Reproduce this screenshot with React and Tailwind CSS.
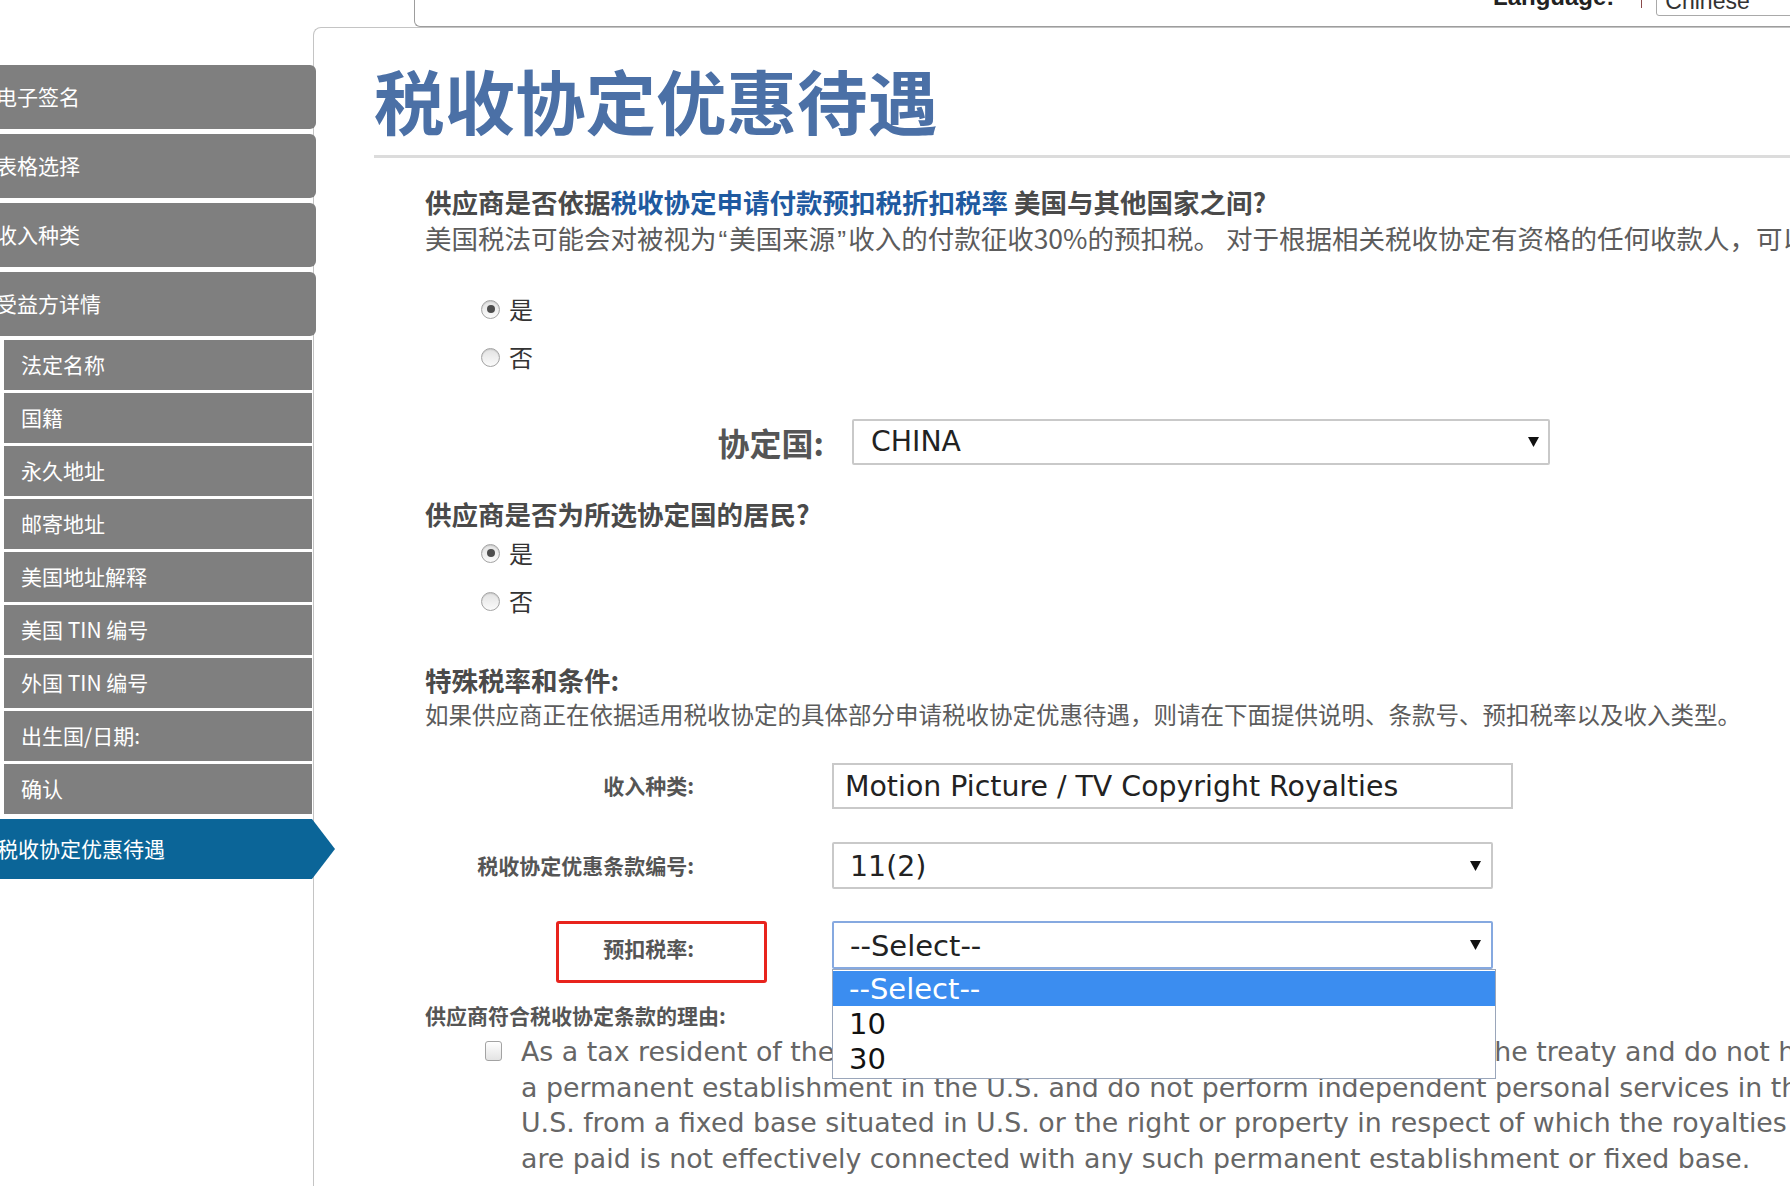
import React from "react";

const topItems = ["电子签名", "表格选择", "收入种类", "受益方详情"];
const subItems = [
  "法定名称",
  "国籍",
  "永久地址",
  "邮寄地址",
  "美国地址解释",
  "美国 TIN 编号",
  "外国 TIN 编号",
  "出生国/日期:",
  "确认",
];

function Arrow() {
  return (
    <svg width="11" height="10" viewBox="0 0 11 10" className="shrink-0">
      <polygon points="0,0 11,0 5.5,10" fill="#111" />
    </svg>
  );
}

function Radio({ checked, label }) {
  return (
    <div className="h-[48px] flex items-center">
      <span className="w-[19px] h-[19px] rounded-full border border-[#a3a3a3] bg-linear-to-b from-[#e2e2e2] to-[#fbfbfb] flex items-center justify-center shadow-[inset_0_1px_1px_rgba(0,0,0,0.12)]">
        {checked && <span className="w-[8px] h-[8px] rounded-full bg-[#4d4d4d]" />}
      </span>
      <span className="ml-[9px] text-[24px] leading-[30px] text-[#333]">{label}</span>
    </div>
  );
}

export default function App() {
  return (
    <div className="w-[1790px] h-[1186px] overflow-hidden bg-white relative font-['Noto_Sans_CJK_SC',sans-serif]">
      {/* header remnant */}
      <div className="h-[27px] flex">
        <div className="w-[414px] shrink-0" />
        <div className="flex-1 border-l border-b border-[#9d9d9d] rounded-bl-[6px] overflow-hidden flex items-end pl-[1078px] font-['Liberation_Sans',Arial,sans-serif]">
          <span className="text-[24px] leading-[24px] font-bold text-[#222] mb-[17px] whitespace-nowrap">Language:</span>
          <span className="ml-[27px] w-[1px] h-[20px] bg-[#8a4a4a] mb-[18px] shrink-0" />
          <div className="ml-[14px] mb-[10px] w-[160px] h-[40px] shrink-0 border border-[#a9a9a9] rounded-[3px] flex items-end pl-[8px] pb-[2px]">
            <span className="text-[23px] leading-[23px] text-[#333]">Chinese</span>
          </div>
        </div>
      </div>

      <div className="flex">
        {/* sidebar */}
        <aside className="w-[313px] shrink-0 pt-[38px] relative z-10">
          {topItems.map((t, i) => (
            <div
              key={t}
              className={`w-[316px] h-[64px] bg-[#7f7f7f] rounded-r-[6px] flex items-center text-white text-[21px] ${i === 3 ? "mb-[4px]" : "mb-[5px]"}`}
            >
              <span className="-ml-[4px] whitespace-nowrap">{t}</span>
            </div>
          ))}
          {subItems.map((t) => (
            <div
              key={t}
              className="ml-[4px] w-[308px] h-[50px] mb-[3px] bg-[#7f7f7f] flex items-center pl-[17px] text-white text-[21px] whitespace-nowrap"
            >
              {t}
            </div>
          ))}
          <div className="relative mt-[5px] w-[312px] h-[60px] bg-[#0b6598] flex items-center text-white text-[21px]">
            <span className="-ml-[3px] whitespace-nowrap">税收协定优惠待遇</span>
            <svg width="23" height="60" viewBox="0 0 23 60" className="absolute left-[312px] top-0">
              <polygon points="0,0 23,30 0,60" fill="#0b6598" />
            </svg>
          </div>
        </aside>

        {/* main panel */}
        <main className="flex-1 min-w-0 border-l border-t border-[#c4c4c4] rounded-tl-[8px] h-[1159px]">
          <h1 className="ml-[60px] mt-[31px] text-[70.5px] leading-[80px] font-bold text-[#4b70a6] pb-[16px] border-b-[3px] border-[#dcdcdc] whitespace-nowrap">
            税收协定优惠待遇
          </h1>

          <div className="pl-[111px]">
            <div className="mt-[26px] text-[26.5px] leading-[36px] font-bold text-[#4a4a4a] whitespace-nowrap">
              供应商是否依据<span className="text-[#1f5aa0]">税收协定申请付款预扣税折扣税率</span> 美国与其他国家之间?
            </div>
            <div className="text-[26.5px] leading-[36px] text-[#5c5c5c] whitespace-nowrap">
              美国税法可能会对被视为<span className="font-['Liberation_Sans',sans-serif] px-[2px]">“</span>美国来源<span className="font-['Liberation_Sans',sans-serif] px-[2px]">”</span>收入的付款征收30%的预扣税。 对于根据相关税收协定有资格的任何收款人，可以申请降低预扣税率。
            </div>

            <div className="mt-[27px] pl-[56px]">
              <Radio checked label="是" />
              <Radio label="否" />
            </div>

            <div className="mt-[38px] flex items-center h-[46px]">
              <div className="w-[399px] shrink-0 text-right text-[32px] font-bold text-[#555] whitespace-nowrap">协定国:</div>
              <div className="ml-[28px] w-[698px] h-[46px] shrink-0 border-2 border-[#c9c9c9] rounded-[2px] flex items-center justify-between pl-[17px] pr-[9px] font-['DejaVu_Sans',sans-serif] text-[28.3px] text-[#222]">
                <span>CHINA</span>
                <Arrow />
              </div>
            </div>

            <div className="mt-[31px] text-[26.5px] leading-[36px] font-bold text-[#4a4a4a] whitespace-nowrap">
              供应商是否为所选协定国的居民?
            </div>
            <div className="-mt-[3px] pl-[56px]">
              <Radio checked label="是" />
              <Radio label="否" />
            </div>

            <div className="mt-[37px] text-[26.5px] leading-[36px] font-bold text-[#4a4a4a] whitespace-nowrap">
              特殊税率和条件:
            </div>
            <div className="text-[23.5px] leading-[32px] text-[#5c5c5c] whitespace-nowrap">
              如果供应商正在依据适用税收协定的具体部分申请税收协定优惠待遇，则请在下面提供说明、条款号、预扣税率以及收入类型。
            </div>

            <div className="mt-[33px] flex items-center">
              <div className="w-[269px] shrink-0 text-right text-[21px] font-bold text-[#555] whitespace-nowrap">收入种类:</div>
              <div className="ml-[138px] w-[681px] h-[46px] shrink-0 border-2 border-[#c9c9c9] flex items-center pl-[11px] pt-[3px] font-['DejaVu_Sans',sans-serif] text-[28.4px] text-[#222] whitespace-nowrap">
                Motion Picture / TV Copyright Royalties
              </div>
            </div>

            <div className="mt-[33px] flex items-center">
              <div className="w-[269px] shrink-0 text-right text-[21px] font-bold text-[#555] whitespace-nowrap">税收协定优惠条款编号:</div>
              <div className="ml-[138px] w-[661px] h-[47px] shrink-0 border-2 border-[#c9c9c9] rounded-[2px] flex items-center justify-between pl-[16px] pr-[10px] font-['DejaVu_Sans',sans-serif] text-[28.4px] text-[#222]">
                <span className="pt-[3px]">11(2)</span>
                <Arrow />
              </div>
            </div>

            <div className="mt-[32px] relative flex items-start">
              <div className="w-[269px] h-[56px] shrink-0 flex items-center justify-end text-[21px] font-bold text-[#555] whitespace-nowrap">预扣税率:</div>
              <div className="ml-[138px] w-[661px] h-[48px] shrink-0 border-2 border-[#86a9e0] rounded-[2px] flex items-center justify-between pl-[16px] pr-[10px] font-['DejaVu_Sans',sans-serif] text-[29px] text-[#222]">
                <span className="pt-[3px]">--Select--</span>
                <Arrow />
              </div>

              {/* red annotation box */}
              <div className="absolute left-[131px] top-0 w-[211px] h-[62px] border-[3px] border-[#e8231d] rounded-[3px]" />

              {/* open dropdown list */}
              <div className="absolute left-[407px] top-[48px] w-[664px] h-[110px] border border-[#9aa6ba] bg-white z-20 pt-[1px] font-['DejaVu_Sans',sans-serif] text-[29px] text-[#111]">
                <div className="h-[35px] bg-[#3b8df0] text-white flex items-center pl-[16px] pt-[2px]">--Select--</div>
                <div className="h-[35px] flex items-center pl-[16px] pt-[2px]">10</div>
                <div className="h-[35px] flex items-center pl-[16px] pt-[2px]">30</div>
              </div>
            </div>

            <div className="mt-[23px] text-[21px] leading-[30px] font-bold text-[#555] whitespace-nowrap">
              供应商符合税收协定条款的理由:
            </div>
            <div className="mt-[4px] flex items-start pl-[60px]">
              <span className="mt-[7px] w-[17px] h-[20px] shrink-0 rounded-[3px] border border-[#a3a3a3] bg-linear-to-b from-[#ffffff] to-[#e3e3e3]" />
              <div className="ml-[19px] font-['DejaVu_Sans',sans-serif] text-[26.8px] leading-[35.5px] text-[#666] whitespace-nowrap">
                <div>As a tax resident of the Peoples Republic of China, I am qualified under the treaty and do not have</div>
                <div>a permanent establishment in the U.S. and do not perform independent personal services in the</div>
                <div>U.S. from a fixed base situated in U.S. or the right or property in respect of which the royalties</div>
                <div>are paid is not effectively connected with any such permanent establishment or fixed base.</div>
              </div>
            </div>
          </div>
        </main>
      </div>
    </div>
  );
}
